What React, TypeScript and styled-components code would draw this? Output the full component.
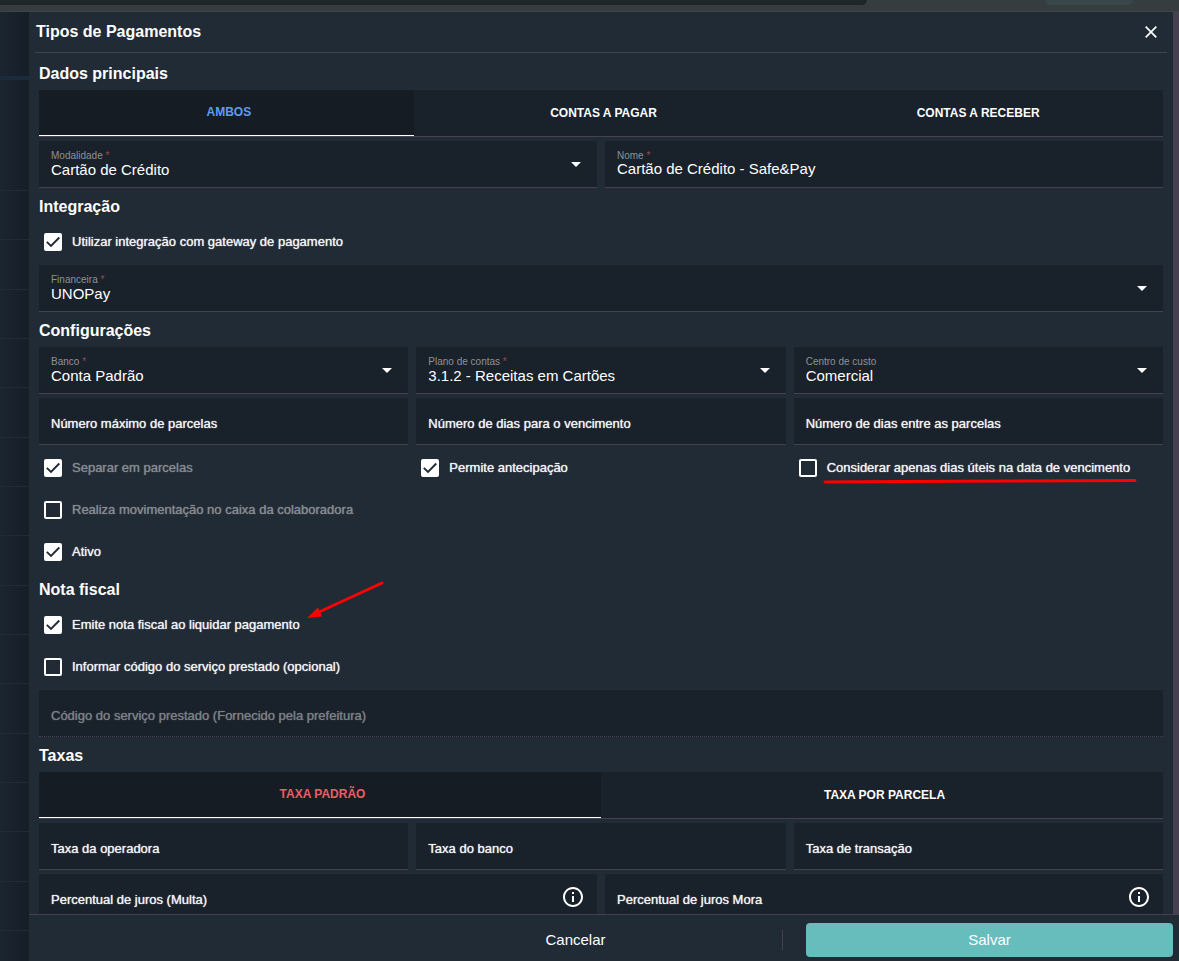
import React from "react";
import styled, { createGlobalStyle } from "styled-components";

const GlobalStyle = createGlobalStyle`
  *, *::before, *::after { box-sizing: border-box; }
  body {
    margin: 0;
    background: #18212b;
    color: #fff;
    font-family: "Liberation Sans", Arial, sans-serif;
    font-size: 15px;
  }
  button, input, select { font: inherit; color: inherit; }
`;

const Screen = styled.div`
  height: 100vh;
  display: flex;
  flex-direction: column;
  overflow: hidden;
`;

const BrowserBar = styled.div`
  height: 12px;
  flex: none;
  display: flex;
  align-items: flex-start;
  background: #363d3f;
  border-bottom: 1px solid #414644;
`;

const AddressField = styled.div`
  flex: 1;
  height: 5px;
  background: #1f2628;
  border-radius: 0 0 18px 0;
`;

const BrowserActions = styled.div`
  width: 26.5%;
  display: flex;
  justify-content: flex-end;
  padding-right: 46px;
`;

const ProfileChip = styled.div`
  width: 88px;
  height: 5px;
  background: #37474a;
  border-radius: 0 0 18px 18px;
`;

const Workspace = styled.div`
  flex: 1;
  min-height: 0;
  display: flex;
`;

const Backdrop = styled.div`
  width: 29px;
  flex: none;
  display: flex;
  flex-direction: column;
  overflow: hidden;
  background: linear-gradient(90deg, #1a252f, #18212b 60%, #151d27);
`;

const BackdropHeader = styled.div`
  height: 68px;
  flex: none;
  border-bottom: 4px solid #1b2b3e;
`;

const BackdropToolbar = styled.div`
  height: 111px;
  flex: none;
  border-bottom: 1px solid #222b34;
`;

const BackdropRow = styled.div<{ $tall: boolean }>`
  height: ${(p) => (p.$tall ? 50 : 49)}px;
  flex: none;
  border-bottom: 1px solid #222b34;
`;

const Dialog = styled.div`
  flex: 1;
  min-width: 0;
  display: flex;
  flex-direction: column;
  background: #212b35;
`;

const DialogMain = styled.div`
  flex: 1;
  min-height: 0;
  display: flex;
`;

const DialogColumn = styled.div`
  flex: 1;
  min-width: 0;
  display: flex;
  flex-direction: column;
`;

const ScrollRail = styled.div`
  width: 6px;
  flex: none;
  background: #454150;
`;

const DialogHeader = styled.header`
  height: 41px;
  flex: none;
  margin: 0 6px;
  padding: 0 6px 0 1px;
  display: flex;
  align-items: center;
  justify-content: space-between;
  border-bottom: 1px solid #454150;
`;

const Title = styled.h1`
  margin: 0;
  font-size: 16px;
  line-height: 38px;
`;

const CloseButton = styled.button`
  width: 20px;
  height: 20px;
  padding: 0;
  display: grid;
  place-items: center;
  border: 0;
  background: none;
`;

const Form = styled.form`
  flex: 1;
  min-height: 0;
  overflow-y: auto;
  scrollbar-width: none;
  padding: 4px 10px 0;
`;

const SectionTitle = styled.h2`
  margin: 0;
  padding-top: 2px;
  font-size: 16px;
  line-height: 29px;
`;

const Columns = styled.div<{ $count: number }>`
  display: grid;
  grid-template-columns: repeat(${(p) => p.$count}, minmax(0, 1fr));
  column-gap: 8px;
`;

const TabList = styled.div<{ $count: number }>`
  display: grid;
  grid-template-columns: repeat(${(p) => p.$count}, minmax(0, 1fr));
  margin: 2px 0;
  height: 47px;
  background: #19212a;
  border-bottom: 1px solid #454150;
`;

const Tab = styled.button<{ $color?: string }>`
  padding: 0 4px ${(p) => (p.$color ? 2 : 0)}px 9px;
  border: 0;
  border-bottom: 1px solid ${(p) => (p.$color ? "#fff" : "transparent")};
  background: ${(p) => (p.$color ? "#161c23" : "transparent")};
  color: ${(p) => p.$color ?? "#fff"};
  font-size: 12px;
  font-weight: 700;
`;

const FieldBox = styled.div<{ $dashed?: boolean }>`
  height: 47px;
  margin: 2px 0;
  padding: 0 12px;
  display: grid;
  grid-template-columns: minmax(0, 1fr) auto;
  background: #19212a;
  border-bottom: 1px ${(p) => (p.$dashed ? "dotted" : "solid")} #454150;
`;

const FloatingLabel = styled.label`
  grid-area: 1 / 1;
  align-self: start;
  padding-top: 9px;
  font-size: 10px;
  line-height: 12px;
  color: #8d9297;
  pointer-events: none;
`;

const Required = styled.span`
  color: #9a4a52;
`;

const RestingLabel = styled.label<{ $muted?: boolean }>`
  grid-area: 1 / 1;
  padding-top: 18px;
  font-size: 13px;
  line-height: 16px;
  color: ${(p) => (p.$muted ? "#7b8085" : "#f2f3f4")};
  text-shadow: 0 0 1px currentColor;
  pointer-events: none;
`;

const Select = styled.select`
  grid-area: 1 / 1 / 2 / 3;
  width: 100%;
  height: 46px;
  padding: 10px 0 0;
  border: 0;
  outline: 0;
  appearance: none;
  background: transparent;
`;

const Input = styled.input`
  grid-area: 1 / 1;
  width: 100%;
  height: 46px;
  padding: 8px 0 0;
  border: 0;
  outline: 0;
  background: transparent;
`;

const Trailing = styled.span`
  grid-area: 1 / 2;
  align-self: center;
  display: grid;
  pointer-events: none;
`;

const CaretSlot = styled(Trailing)`
  padding-right: 4px;
`;

const CheckRow = styled.div`
  height: 42px;
  padding-left: 5px;
  display: flex;
  align-items: center;
  gap: 10px;
`;

const CheckMark = styled.span`
  display: grid;
  > * { grid-area: 1 / 1; }
  > svg { pointer-events: none; }
`;

const CheckInput = styled.input`
  width: 18px;
  height: 18px;
  margin: 0;
  appearance: none;
  border: 2px solid #fff;
  border-radius: 2px;
  &:checked { background: #fff; }
  &:not(:checked) + svg { display: none; }
`;

const CheckLabel = styled.label<{ $muted?: boolean }>`
  position: relative;
  font-size: 13px;
  line-height: 16px;
  white-space: nowrap;
  color: ${(p) => (p.$muted ? "#868b90" : "#f2f3f4")};
  text-shadow: 0 0 1px currentColor;
`;

const Underline = styled.svg`
  position: absolute;
  left: -4px;
  top: 17px;
  width: 314px;
  height: 8px;
`;

const Arrow = styled.svg`
  position: absolute;
  left: 234px;
  bottom: 13px;
  width: 80px;
  height: 40px;
`;

const Footer = styled.footer`
  height: 47px;
  flex: none;
  padding: 8px 6px 4px 0;
  display: grid;
  grid-template-columns: 340fr 414fr 390fr;
  border-top: 1px solid #454150;
`;

const CancelCell = styled.div`
  grid-column: 2;
  display: flex;
  align-items: center;
`;

const Divider = styled.span`
  width: 1px;
  height: 20px;
  background: #454150;
`;

const CancelButton = styled.button`
  flex: 1;
  height: 34px;
  padding: 0 0 2px;
  border: 0;
  background: none;
`;

const SaveButton = styled.button`
  grid-column: 3;
  height: 34px;
  margin-left: 23px;
  padding: 0 0 2px;
  border: 0;
  border-radius: 4px;
  background: #67bcbc;
`;

const InfoIcon = () => (
  <svg width="24" height="24" viewBox="0 0 24 24" fill="#fff" aria-hidden="true">
    <path d="M11 7h2v2h-2zm0 4h2v6h-2zm1-9C6.480 2 2 6.480 2 12s4.480 10 10 10 10-4.480 10-10S17.520 2 12 2zm0 18c-4.410 0-8-3.590-8-8s3.590-8 8-8 8 3.590 8 8-3.590 8-8 8z" />
  </svg>
);

type FieldProps = { id: string; label: string; value?: string; required?: boolean };

const Caption = ({ id, label, required }: FieldProps) => (
  <FloatingLabel htmlFor={id}>
    {label}
    {required && <Required> *</Required>}
  </FloatingLabel>
);

const SelectField = (props: FieldProps) => (
  <FieldBox>
    <Select id={props.id} defaultValue={props.value}>
      <option>{props.value}</option>
    </Select>
    <Caption {...props} />
    <CaretSlot>
      <svg width="10" height="5" viewBox="0 0 10 5" aria-hidden="true">
        <path d="M0 0h10L5 5z" fill="#fff" />
      </svg>
    </CaretSlot>
  </FieldBox>
);

const TextField = (props: FieldProps) => (
  <FieldBox>
    <Input id={props.id} defaultValue={props.value} />
    <Caption {...props} />
  </FieldBox>
);

const EmptyField = ({ id, label, info, disabled }: { id: string; label: string; info?: boolean; disabled?: boolean }) => (
  <FieldBox $dashed={disabled}>
    <Input id={id} disabled={disabled} />
    <RestingLabel htmlFor={id} $muted={disabled}>{label}</RestingLabel>
    {info && <Trailing><InfoIcon /></Trailing>}
  </FieldBox>
);

type CheckProps = { id: string; label: string; checked?: boolean; disabled?: boolean; children?: React.ReactNode };

const Check = ({ id, label, checked, disabled, children }: CheckProps) => (
  <CheckRow>
    <CheckMark>
      <CheckInput type="checkbox" id={id} defaultChecked={checked} disabled={disabled} />
      <svg width="18" height="18" viewBox="0 0 18 18" aria-hidden="true">
        <path d="M2.800 8.800l4.200 4.200 8.300-8.500" fill="none" stroke="#212b35" strokeWidth="1.900" />
      </svg>
    </CheckMark>
    <CheckLabel htmlFor={id} $muted={disabled}>
      {label}
      {children}
    </CheckLabel>
  </CheckRow>
);

const backdropRows = Array.from({ length: 16 }, (_, i) => i);

export default function App() {
  return (
    <Screen>
      <GlobalStyle />
      <BrowserBar>
        <AddressField />
        <BrowserActions><ProfileChip /></BrowserActions>
      </BrowserBar>
      <Workspace>
        <Backdrop>
          <BackdropHeader />
          <BackdropToolbar />
          {backdropRows.map((i) => <BackdropRow key={i} $tall={i % 3 === 1} />)}
        </Backdrop>
        <Dialog role="dialog" aria-labelledby="dialog-title">
          <DialogMain>
            <DialogColumn>
              <DialogHeader>
                <Title id="dialog-title">Tipos de Pagamentos</Title>
                <CloseButton type="button" aria-label="Fechar">
                  <svg width="12" height="12" viewBox="0 0 12 12" aria-hidden="true">
                    <path d="M.7.7l10.600 10.600M11.300.7L.7 11.300" stroke="#fff" strokeWidth="1.700" />
                  </svg>
                </CloseButton>
              </DialogHeader>
              <Form id="payment-form">
                <SectionTitle>Dados principais</SectionTitle>
                <TabList $count={3} role="tablist">
                  <Tab type="button" role="tab" aria-selected $color="#5f9cf0">AMBOS</Tab>
                  <Tab type="button" role="tab">CONTAS A PAGAR</Tab>
                  <Tab type="button" role="tab">CONTAS A RECEBER</Tab>
                </TabList>
                <Columns $count={2}>
                  <SelectField id="modalidade" label="Modalidade" value="Cartão de Crédito" required />
                  <TextField id="nome" label="Nome" value="Cartão de Crédito - Safe&Pay" required />
                </Columns>

                <SectionTitle>Integração</SectionTitle>
                <Check id="gateway" label="Utilizar integração com gateway de pagamento" checked />
                <SelectField id="financeira" label="Financeira" value="UNOPay" required />

                <SectionTitle>Configurações</SectionTitle>
                <Columns $count={3}>
                  <SelectField id="banco" label="Banco" value="Conta Padrão" required />
                  <SelectField id="plano" label="Plano de contas" value="3.1.2 - Receitas em Cartões" required />
                  <SelectField id="centro" label="Centro de custo" value="Comercial" />
                  <EmptyField id="max-parcelas" label="Número máximo de parcelas" />
                  <EmptyField id="dias-vencimento" label="Número de dias para o vencimento" />
                  <EmptyField id="dias-parcelas" label="Número de dias entre as parcelas" />
                  <Check id="separar" label="Separar em parcelas" checked disabled />
                  <Check id="antecipacao" label="Permite antecipação" checked />
                  <Check id="dias-uteis" label="Considerar apenas dias úteis na data de vencimento">
                    <Underline viewBox="0 0 314 8" aria-hidden="true">
                      <path d="M2 5L80 4.500 312 3.500" fill="none" stroke="#f00" strokeWidth="3" strokeLinecap="round" />
                    </Underline>
                  </Check>
                </Columns>
                <Check id="caixa" label="Realiza movimentação no caixa da colaboradora" disabled />
                <Check id="ativo" label="Ativo" checked />

                <SectionTitle>Nota fiscal</SectionTitle>
                <Check id="emite" label="Emite nota fiscal ao liquidar pagamento" checked>
                  <Arrow viewBox="0 0 80 40" aria-hidden="true">
                    <path d="M76 3L13 32" fill="none" stroke="#f00" strokeWidth="3" strokeLinecap="round" />
                    <path d="M1 38L12 27.500 16 36.500z" fill="#f00" />
                  </Arrow>
                </Check>
                <Check id="informar" label="Informar código do serviço prestado (opcional)" />
                <EmptyField id="codigo" label="Código do serviço prestado (Fornecido pela prefeitura)" disabled />

                <SectionTitle>Taxas</SectionTitle>
                <TabList $count={2} role="tablist">
                  <Tab type="button" role="tab" aria-selected $color="#e85f66">TAXA PADRÃO</Tab>
                  <Tab type="button" role="tab">TAXA POR PARCELA</Tab>
                </TabList>
                <Columns $count={3}>
                  <EmptyField id="taxa-operadora" label="Taxa da operadora" />
                  <EmptyField id="taxa-banco" label="Taxa do banco" />
                  <EmptyField id="taxa-transacao" label="Taxa de transação" />
                </Columns>
                <Columns $count={2}>
                  <EmptyField id="juros-multa" label="Percentual de juros (Multa)" info />
                  <EmptyField id="juros-mora" label="Percentual de juros Mora" info />
                </Columns>
              </Form>
            </DialogColumn>
            <ScrollRail />
          </DialogMain>
          <Footer>
            <CancelCell>
              <CancelButton type="button">Cancelar</CancelButton>
              <Divider />
            </CancelCell>
            <SaveButton type="submit" form="payment-form">Salvar</SaveButton>
          </Footer>
        </Dialog>
      </Workspace>
    </Screen>
  );
}
